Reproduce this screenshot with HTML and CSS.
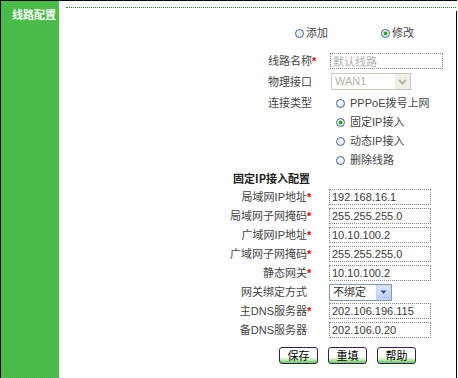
FILE: index.html
```html
<!DOCTYPE html>
<html lang="zh-CN">
<head>
<meta charset="utf-8">
<title>线路配置</title>
<link rel="stylesheet" href="styles.css">
</head>
<body>
<div class="frame">
  <aside class="sidebar">
    <h1 class="side-title">线路配置</h1>
  </aside>
  <main class="main">
    <div class="rule"></div>
    <div class="content">
      <div class="mode-row">
        <label class="radio-item"><input type="radio" name="mode" class="radio">添加</label>
        <label class="radio-item"><input type="radio" name="mode" class="radio" checked>修改</label>
      </div>

      <div class="grid-line">
        <span class="lbl">线路名称</span><span class="req">*</span>
        <input class="txt wide" type="text" value="默认线路" disabled>

        <span class="lbl">物理接口</span><span></span>
        <div class="select disabled">
          <span class="val">WAN1</span>
          <span class="sel-btn"><svg width="9" height="6" viewBox="0 0 9 6"><path d="M1 1 L4.5 4.5 L8 1" fill="none" stroke="#b9b5aa" stroke-width="2"/></svg></span>
        </div>

        <span class="lbl lbl-top">连接类型</span><span></span>
        <div class="radio-group">
          <label class="radio-item opt"><input type="radio" name="type" class="radio">PPPoE拨号上网</label>
          <label class="radio-item opt"><input type="radio" name="type" class="radio" checked>固定IP接入</label>
          <label class="radio-item opt"><input type="radio" name="type" class="radio">动态IP接入</label>
          <label class="radio-item opt"><input type="radio" name="type" class="radio">删除线路</label>
        </div>
      </div>

      <div class="section-title">固定IP接入配置</div>

      <div class="grid-ip">
        <span class="lbl">局域网IP地址</span><span class="req">*</span>
        <input class="txt narrow" type="text" value="192.168.16.1">
        <span class="lbl">局域网子网掩码</span><span class="req">*</span>
        <input class="txt narrow" type="text" value="255.255.255.0">
        <span class="lbl">广域网IP地址</span><span class="req">*</span>
        <input class="txt narrow" type="text" value="10.10.100.2">
        <span class="lbl">广域网子网掩码</span><span class="req">*</span>
        <input class="txt narrow" type="text" value="255.255.255.0">
        <span class="lbl">静态网关</span><span class="req">*</span>
        <input class="txt narrow" type="text" value="10.10.100.2">
        <span class="lbl">网关绑定方式</span><span></span>
        <div class="select bind">
          <span class="val">不绑定</span>
          <span class="sel-btn blue"><svg width="7" height="5" viewBox="0 0 7 5"><path d="M0.5 0.5 L3.5 4 L6.5 0.5 Z" fill="#3a4f7a"/></svg></span>
        </div>
        <span class="lbl">主DNS服务器</span><span class="req">*</span>
        <input class="txt narrow" type="text" value="202.106.196.115">
        <span class="lbl">备DNS服务器</span><span></span>
        <input class="txt narrow" type="text" value="202.106.0.20">
      </div>

      <div class="actions">
        <button class="btn-xp" type="button">保存</button>
        <button class="btn-xp" type="button">重填</button>
        <button class="btn-xp" type="button">帮助</button>
      </div>
    </div>
  </main>
</div>
</body>
</html>
```

FILE: styles.css
```css
body {
  margin: 0;
  background: #fff;
  font-family: "Liberation Sans", "Noto Sans CJK SC", sans-serif;
  font-size: 11px;
  color: #454545;
}

.frame {
  display: flex;
  width: 457px;
  height: 378px;
  box-sizing: border-box;
  border-top: 1px solid #000;
  border-left: 1px solid #000;
}

.sidebar {
  width: 58px;
  flex: none;
  box-sizing: border-box;
  padding: 7px 0 0 11px;
  background: repeating-conic-gradient(#5ea55e 0 25%, #34d234 0 50%) 0 0 / 2px 2px;
}

.side-title {
  margin: 0;
  font-family: "Noto Sans CJK SC", sans-serif;
  font-size: 11px;
  line-height: 13px;
  font-weight: bold;
  color: #fff;
}

.main {
  flex: 1;
  min-width: 0;
  display: flex;
  flex-direction: column;
}

.rule {
  margin: 6px 1px 0 7px;
  border-top: 1px dotted #1e8a1e;
}

.content {
  flex: 1;
  margin-top: 3px;
  padding-top: 14px;
  border-right: 1px solid #000;
}

.mode-row {
  display: flex;
  align-items: center;
  height: 16px;
  padding-left: 236px;
  gap: 53px;
}

.radio-item {
  display: flex;
  align-items: center;
  gap: 2px;
  line-height: 16px;
  white-space: nowrap;
}

.radio {
  appearance: none;
  -webkit-appearance: none;
  margin: 0;
  width: 9px;
  height: 9px;
  box-sizing: border-box;
  border: 1px solid #3d6c9c;
  border-radius: 50%;
  background: radial-gradient(circle at 40% 40%, #ffffff, #d9dee6);
  flex: none;
}

.radio:checked {
  background: radial-gradient(circle, #23b023 0 1.7px, #e6ebe6 2.2px);
}

.grid-line {
  display: grid;
  grid-template-columns: 253px 18px 1fr;
  grid-template-rows: 16px 17px auto;
  row-gap: 4px;
  margin-top: 12px;
  align-items: center;
}

.grid-ip {
  display: grid;
  grid-template-columns: 248px 22px 1fr;
  grid-auto-rows: 16px;
  row-gap: 3px;
  margin-top: 5px;
  align-items: center;
}

.lbl {
  text-align: right;
  line-height: 16px;
  white-space: nowrap;
}

.lbl-top {
  align-self: start;
  line-height: 19px;
}

.req {
  color: #e60000;
  font-weight: bold;
  line-height: 16px;
}

.txt {
  box-sizing: border-box;
  height: 16px;
  margin: 0;
  padding: 0 2px;
  border: 1px dotted #8a8a8a;
  background: #fff;
  font-family: "Liberation Sans", "Noto Sans CJK SC", sans-serif;
  font-size: 11px;
  color: #3a3a3a;
  outline: none;
}

.txt.wide {
  width: 113px;
}

.txt.narrow {
  width: 102px;
}

.txt:disabled {
  color: #b0b0b0;
  background: #fff;
}

.select {
  display: flex;
  align-items: center;
  box-sizing: border-box;
  height: 17px;
  border: 1px solid #7f9db9;
  background: #fff;
}

.select .val {
  flex: 1;
  padding-left: 3px;
  line-height: 15px;
  color: #333;
}

.select.disabled {
  width: 80px;
  margin-left: 1px;
  border-color: #cdc9bc;
}

.select.disabled .val {
  color: #b9b3a8;
}

.select.bind {
  width: 63px;
}

.sel-btn {
  width: 15px;
  height: 15px;
  display: flex;
  align-items: center;
  justify-content: center;
  background: #f1efe8;
}

.sel-btn.blue {
  background: linear-gradient(#dfe8fd, #b7c9f4);
  box-shadow: inset 0 0 0 1px #c8d6f8;
}

.radio-group {
  display: flex;
  flex-direction: column;
  padding-left: 6px;
}

.radio-item.opt {
  height: 19px;
  line-height: 19px;
  gap: 5px;
}

.section-title {
  margin: 2px 0 0 174px;
  font-family: "Noto Sans CJK SC", sans-serif;
  font-weight: bold;
  font-size: 11px;
  line-height: 12px;
  color: #222;
}

.actions {
  display: flex;
  gap: 10px;
  margin: 9px 0 0 220px;
}

.btn-xp {
  width: 39px;
  height: 17px;
  box-sizing: border-box;
  padding: 0;
  border: 1px solid #3b1a5e;
  border-radius: 3px;
  background: linear-gradient(#ffffff 0, #ffffff 60%, #cdeec0 75%, #5fcf4f 100%);
  font-family: "Noto Sans CJK SC", sans-serif;
  font-size: 11px;
  line-height: 15px;
  color: #000;
}
```
